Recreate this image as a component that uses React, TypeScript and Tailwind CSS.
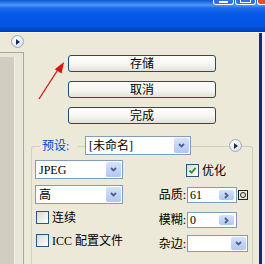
import React from "react"

function RoundArrow() {
  return (
    <span className="flex h-[13px] w-[13px] shrink-0 items-center justify-center rounded-full border border-[#9FA9BA] bg-[radial-gradient(circle_at_40%_35%,#FFFFFF,#D3DCEB)]">
      <svg width="4" height="6" viewBox="0 0 4 6">
        <path d="M0 0L4 3L0 6Z" fill="#1B2A56" />
      </svg>
    </span>
  )
}

function Chevron({ dir }: { dir: "down" | "right" }) {
  return (
    <svg width="7" height="7" viewBox="0 0 7 7">
      {dir === "down" ? (
        <path d="M1 2L3.5 4.5L6 2" stroke="#4D6185" strokeWidth="1.8" fill="none" />
      ) : (
        <path d="M2 1L4.5 3.5L2 6" stroke="#4D6185" strokeWidth="1.8" fill="none" />
      )}
    </svg>
  )
}

function DropButton({ dir = "down" }: { dir?: "down" | "right" }) {
  return (
    <span className="flex h-full w-[15px] shrink-0 items-center justify-center rounded-[2px] bg-[linear-gradient(180deg,#D6E2FC,#B2C6F3)]">
      <Chevron dir={dir} />
    </span>
  )
}

function XpButton({ label }: { label: string }) {
  return (
    <button
      type="button"
      className="ml-[44px] flex h-[17px] w-[148px] items-center justify-center rounded-[3px] border border-[#1F4A7C] bg-[linear-gradient(180deg,#FFFFFF_0%,#F6F5F1_55%,#E4E2D8_100%)] text-[12px] leading-none text-black"
    >
      {label}
    </button>
  )
}

function CheckBox({ checked }: { checked?: boolean }) {
  return (
    <span className="flex h-[13px] w-[13px] shrink-0 items-center justify-center border border-[#2A5580] bg-[linear-gradient(135deg,#D9D9D2,#FFFFFF)]">
      {checked && (
        <svg width="9" height="9" viewBox="0 0 9 9">
          <path d="M1.5 4.5L3.6 6.6L7.6 1.8" stroke="#21A121" strokeWidth="1.9" fill="none" />
        </svg>
      )}
    </span>
  )
}

export default function App() {
  return (
    <div className="relative flex h-[264px] w-[265px] flex-col overflow-hidden bg-[#ECE9D8] text-[12px] text-black [font-family:'Liberation_Serif','Noto_Sans_CJK_SC',serif]">
      {/* title bar */}
      <div className="flex h-[32px] shrink-0 items-start justify-end bg-[linear-gradient(180deg,#1159D6_0px,#2F7BEA_3px,#4F98F5_5px,#1E6BEC_8px,#0659E6_14px,#0354E2_26px,#0046C8_30px,#0036AA_32px)]">
        <div className="h-[5px] w-[21px] rounded-b-[3px] border-x border-b border-white bg-[#2D6FEF]">
          <div className="mx-auto mt-[1px] h-[2px] w-[9px] bg-white" />
        </div>
        <div className="ml-[1px] h-[5px] w-[21px] rounded-b-[3px] border-x border-b border-white bg-[#2D6FEF]">
          <div className="mx-auto h-[3px] w-[11px] border-x border-b border-white" />
        </div>
        <div className="ml-[1px] h-[5px] w-[8px] rounded-bl-[3px] border-b border-l border-white bg-[#E0502E]" />
      </div>
      <div className="h-px shrink-0 bg-[#F8F7F2]" />

      <div className="flex min-h-0 flex-1">
        {/* left preview panel */}
        <div className="flex w-[24px] shrink-0 flex-col">
          <div className="h-[19px] shrink-0 pl-[11px] pt-[2px]">
            <RoundArrow />
          </div>
          <div className="flex flex-1 border-r border-t border-[#ACA899] bg-[#E8E5D9] pt-[4px]">
            <div className="w-[15px] border-r border-[#F1EFE6] bg-[#D1CDC1]" />
          </div>
        </div>

        {/* main column */}
        <div className="flex w-[235px] shrink-0 flex-col">
          <div className="flex flex-col gap-[9px] pt-[22px]">
            <XpButton label="存储" />
            <XpButton label="取消" />
            <XpButton label="完成" />
          </div>

          <div className="ml-[7px] mt-[22px] flex w-[222px] flex-1 flex-col rounded-t-[3px] border-x border-t border-[#D0D0BF]">
            {/* group header */}
            <div className="-mt-[11px] flex h-[19px] items-center pl-[8px]">
              <span className="flex h-full w-[38px] items-center bg-[#ECE9D8] pl-[2px] text-[12px] leading-none text-[#0046D5]">
                预设:
              </span>
              <div className="ml-[7px] flex h-full w-[106px] items-center border border-[#7F9DB9] bg-white p-px">
                <span className="flex-1 pl-[2px] leading-none">[未命名]</span>
                <DropButton />
              </div>
              <div className="ml-[38px] bg-[#ECE9D8]">
                <RoundArrow />
              </div>
            </div>

            <div className="mt-[5px] flex">
              {/* left settings */}
              <div className="flex w-[88px] flex-col pl-0 ml-[3px]">
                <div className="flex h-[19px] items-center border border-[#7F9DB9] bg-white p-px">
                  <span className="flex-1 pl-[2px] leading-none">JPEG</span>
                  <DropButton />
                </div>
                <div className="mt-[6px] flex h-[19px] items-center border border-[#7F9DB9] bg-white p-px">
                  <span className="flex-1 pl-[2px] leading-none">高</span>
                  <DropButton />
                </div>
                <div className="ml-px mt-[7px] flex h-[13px] items-center gap-[3px]">
                  <CheckBox />
                  <span className="leading-none">连续</span>
                </div>
                <div className="ml-px mt-[10px] flex h-[13px] items-center gap-[3px]">
                  <CheckBox />
                  <span className="whitespace-nowrap leading-none">ICC 配置文件</span>
                </div>
              </div>

              {/* right settings */}
              <div className="ml-[30px] flex flex-col">
                <div className="mt-[4px] flex h-[13px] items-center gap-[3px] pl-[33px]">
                  <CheckBox checked />
                  <span className="leading-none">优化</span>
                </div>
                <div className="mt-[10px] flex h-[16px] items-center">
                  <span className="w-[34px] pr-px text-right leading-none">品质:</span>
                  <div className="flex h-full w-[50px] items-center border border-[#7F9DB9] bg-white py-[2px] pr-[2px]">
                    <span className="flex-1 pl-[2px] leading-none">61</span>
                    <DropButton dir="right" />
                  </div>
                  <span className="ml-px flex h-[10px] w-[10px] items-center justify-center border border-[#222]">
                    <span className="h-[6px] w-[6px] rounded-full border border-[#222]" />
                  </span>
                </div>
                <div className="mt-[9px] flex h-[16px] items-center">
                  <span className="w-[34px] pr-px text-right leading-none">模糊:</span>
                  <div className="flex h-full w-[50px] items-center border border-[#7F9DB9] bg-white py-[2px] pr-[2px]">
                    <span className="flex-1 pl-[2px] leading-none">0</span>
                    <DropButton dir="right" />
                  </div>
                </div>
                <div className="mt-[7px] flex h-[17px] items-center">
                  <span className="w-[34px] pr-px text-right leading-none">杂边:</span>
                  <div className="flex h-full w-[61px] items-center border border-[#7F9DB9] bg-white p-px">
                    <span className="flex-1" />
                    <DropButton />
                  </div>
                </div>
              </div>
            </div>
          </div>
        </div>

        <div className="w-[3px] shrink-0 bg-[#0B2B8E]" />
        <div className="flex-1 bg-[#F4E9EC]" />
      </div>

      {/* red annotation arrow */}
      <svg className="pointer-events-none absolute left-0 top-0" width="265" height="264" viewBox="0 0 265 264">
        <path d="M39 99L59 68" stroke="#DD1111" strokeWidth="1.3" />
        <path d="M64 62L61.6 73.5L54.8 69.3Z" fill="#DD1111" />
      </svg>
    </div>
  )
}
